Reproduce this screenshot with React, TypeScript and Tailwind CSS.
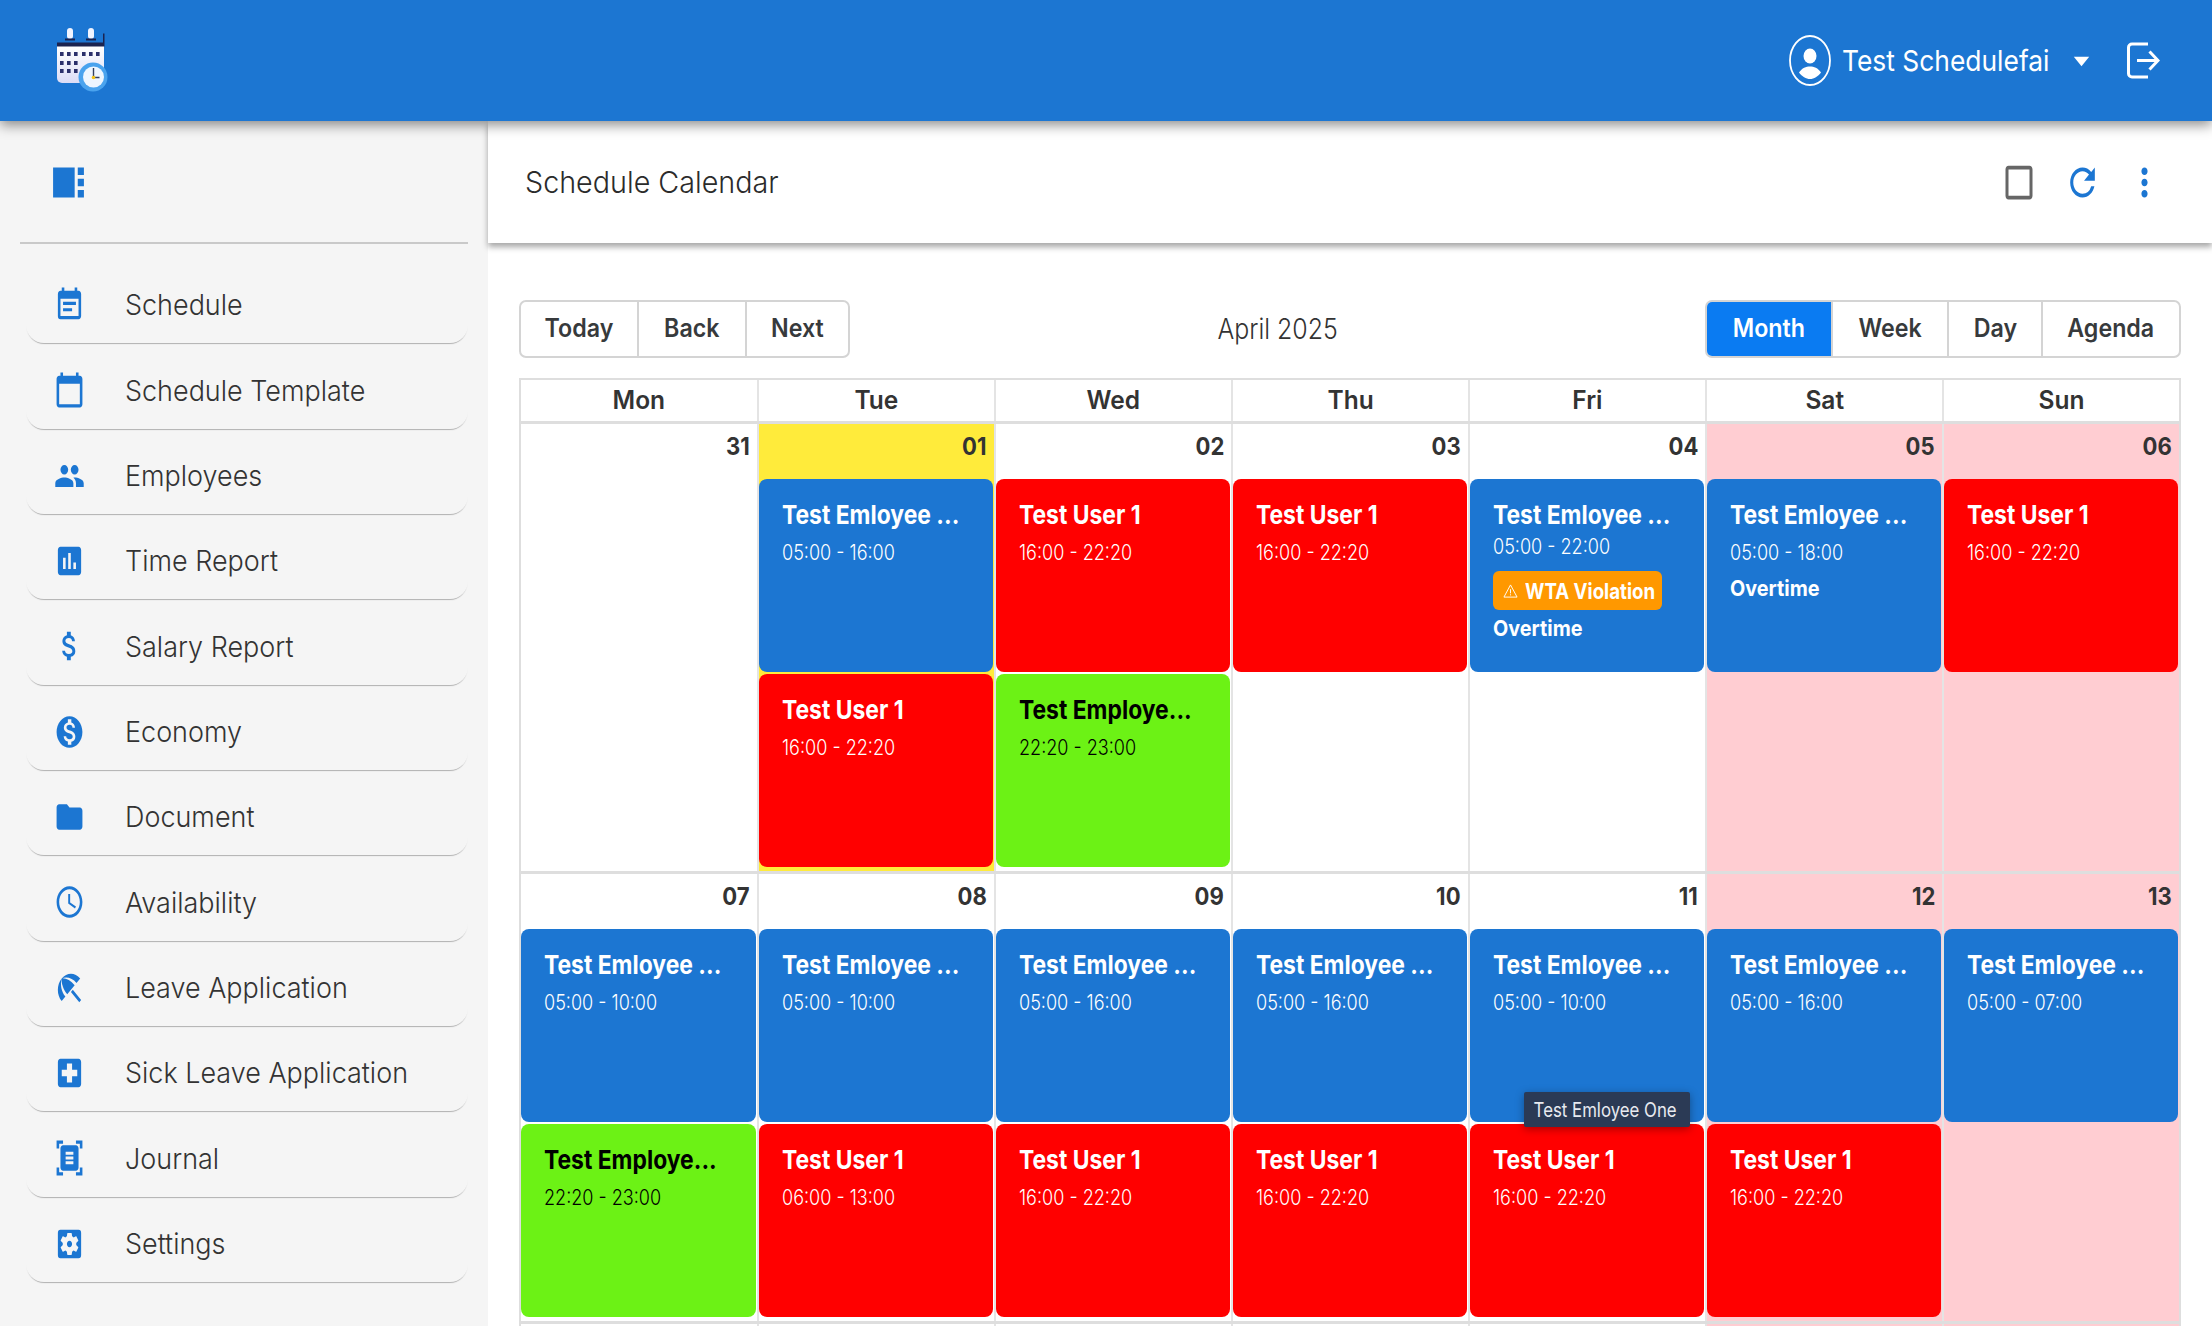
import React from "react";
import {
  MdEventNote, MdCalendarToday, MdPeople, MdAssessment, MdAttachMoney, MdMonetizationOn, MdFolder,
  MdAccessTime, MdBeachAccess, MdLocalHospital, MdDocumentScanner, MdSettingsApplications,
  MdViewSidebar, MdRefresh, MdMoreVert, MdCheckBoxOutlineBlank, MdArrowDropDown,
} from "react-icons/md";

const nav = [
  ["Schedule", MdEventNote], ["Schedule Template", MdCalendarToday], ["Employees", MdPeople],
  ["Time Report", MdAssessment], ["Salary Report", MdAttachMoney], ["Economy", MdMonetizationOn],
  ["Document", MdFolder], ["Availability", MdAccessTime], ["Leave Application", MdBeachAccess],
  ["Sick Leave Application", MdLocalHospital], ["Journal", MdDocumentScanner], ["Settings", MdSettingsApplications],
] as const;

type Ev = { c: "b" | "r" | "g"; t: string; time: string; kind?: "wta" | "ot" };
type Day = { d: string; bg?: string; ev: Ev[] };
const B = (time: string, kind?: "wta" | "ot"): Ev => ({ c: "b", t: "Test Emloyee ...", time, kind });
const R = (time = "16:00 - 22:20"): Ev => ({ c: "r", t: "Test User 1", time });
const G = (): Ev => ({ c: "g", t: "Test Employe...", time: "22:20 - 23:00" });
const W = "bg-[#ffcdd2]";

const weeks: Day[][] = [
  [
    { d: "31", ev: [] },
    { d: "01", bg: "bg-[#ffeb3b]", ev: [B("05:00 - 16:00"), R()] },
    { d: "02", ev: [R(), G()] },
    { d: "03", ev: [R()] },
    { d: "04", ev: [B("05:00 - 22:00", "wta")] },
    { d: "05", bg: W, ev: [B("05:00 - 18:00", "ot")] },
    { d: "06", bg: W, ev: [R()] },
  ],
  [
    { d: "07", ev: [B("05:00 - 10:00"), G()] },
    { d: "08", ev: [B("05:00 - 10:00"), R("06:00 - 13:00")] },
    { d: "09", ev: [B("05:00 - 16:00"), R()] },
    { d: "10", ev: [B("05:00 - 16:00"), R()] },
    { d: "11", ev: [B("05:00 - 10:00"), R()] },
    { d: "12", bg: W, ev: [B("05:00 - 16:00"), R()] },
    { d: "13", bg: W, ev: [B("05:00 - 07:00")] },
  ],
];

function Event({ e, tip }: { e: Ev; tip?: boolean }) {
  const bg = e.c === "b" ? "bg-[#1c76d2]" : e.c === "r" ? "bg-[#ff0000]" : "bg-[#6cf215]";
  const txt = e.c === "g" ? "text-black" : "text-white";
  return (
    <div className={`relative h-[193px] rounded-[8px] ${bg} ${txt} pl-[23px] pt-[21px] flex flex-col items-start`}>
      <span className="inline-block origin-left scale-x-[0.88] whitespace-nowrap text-[26px] leading-[30px] font-bold">{e.t}</span>
      <span className={`inline-block origin-left scale-x-[0.82] whitespace-nowrap text-[22px] leading-[30px] font-light ${e.kind === "wta" ? "mt-px" : "mt-[7px]"}`}>{e.time}</span>
      {e.kind === "wta" && (
        <>
          <div className="mt-[10px] w-[169px] h-[39px] rounded-[6px] bg-[#ff9800] flex items-center pl-[10px] text-white">
            <svg viewBox="0 0 16 16" className="w-[15px] h-[16px] shrink-0">
              <path d="M8 1.500 15 14.500H1z" fill="none" stroke="white" strokeWidth="1" strokeLinejoin="round" />
              <path d="M8 6v4.500M8 11.500v1.200" stroke="white" strokeWidth="1" />
            </svg>
            <span className="ml-[7px] inline-block origin-left scale-x-[0.85] whitespace-nowrap text-[22px] leading-[30px] font-bold">WTA Violation</span>
          </div>
          <span className="mt-[3px] inline-block origin-left scale-x-[0.9] whitespace-nowrap text-[22px] leading-[30px] font-bold">Overtime</span>
        </>
      )}
      {e.kind === "ot" && (
        <span className="mt-[6px] inline-block origin-left scale-x-[0.9] whitespace-nowrap text-[22px] leading-[30px] font-bold">Overtime</span>
      )}
      {tip && (
        <div className="absolute left-[54px] bottom-[-5px] w-[166px] h-[35px] bg-[#2b3a55] text-[#e8eaf0] flex items-center justify-center pr-[3px] shadow-[0_2px_8px_rgba(0,0,0,0.35)] z-10 rounded-[2px]">
          <span className="inline-block scale-x-[0.84] whitespace-nowrap text-[20px] leading-[24px]">Test Emloyee One</span>
        </div>
      )}
    </div>
  );
}

function Segment({ items, active }: { items: string[]; active?: string }) {
  return (
    <div className="flex h-[58px] rounded-[7px] border-2 border-[#d4d4d4] bg-white overflow-hidden">
      {items.map((x, i) => {
        const w: Record<string, string> = {
          Today: "w-[116px]", Back: "w-[108px]", Next: "w-[103px]",
          Month: "w-[124px]", Week: "w-[116px]", Day: "w-[94px]", Agenda: "w-[138px]",
        };
        return (
          <div key={x} className={`${w[x]} flex items-center justify-center ${i ? "border-l-2 border-[#d4d4d4]" : ""} ${x === active ? "bg-[#0a7bf2] text-white" : "text-[#373a3c]"}`}>
            <span className="inline-block scale-x-[0.93] whitespace-nowrap text-[25px] font-semibold">{x}</span>
          </div>
        );
      })}
    </div>
  );
}

function Logo() {
  return (
    <svg viewBox="50 24 62 72" className="w-[62px] h-[72px]">
      <defs>
        <linearGradient id="lg" x1="0" y1="0" x2="0" y2="1">
          <stop offset="0" stopColor="#ffffff" />
          <stop offset="1" stopColor="#dcdcf6" />
        </linearGradient>
      </defs>
      <path d="M57 46h47v32a5 5 0 0 1-5 5H62a5 5 0 0 1-5-5z" fill="url(#lg)" />
      <path d="M57 42.500h46v-9h1.500v13H57z" fill="#1a2350" />
      <rect x="67" y="28" width="6" height="11" rx="3" fill="#f2f4ff" />
      <rect x="88" y="28" width="6" height="11" rx="3" fill="#f2f4ff" />
      <path d="M65 39.500h10M86 39.500h10" stroke="#1a2350" strokeWidth="2" />
      {[52, 61, 69].map((y) =>
        [60, 67, 74, 82, 89, 96].map((x) =>
          y > 55 && x > 80 ? null : y > 65 && x > 75 ? null : <rect key={`${x}${y}`} x={x} y={y} width="3.6" height="4" fill="#2b2f6b" />
        )
      )}
      <circle cx="93" cy="77" r="14.500" fill="#4aa3ee" />
      <circle cx="93.500" cy="77" r="10.500" fill="#eef6ff" />
      <path d="M93.500 68v9.500h6" stroke="#33405f" strokeWidth="1.400" fill="none" />
      <circle cx="93.500" cy="77.500" r="1.800" fill="#f5c518" />
    </svg>
  );
}

export default function App() {
  return (
    <div className="w-[2212px] h-[1326px] overflow-hidden bg-white flex flex-col font-['Inter',sans-serif]">
      <header className="relative z-20 h-[121px] shrink-0 bg-[#1c76d2] flex items-center shadow-[0_4px_12px_rgba(0,0,0,0.45)] text-white">
        <div className="ml-[50px] mt-[-1px]"><Logo /></div>
        <div className="ml-auto flex items-center">
          <svg viewBox="0 0 42 51" className="w-[42px] h-[51px]">
            <ellipse cx="21" cy="25.500" rx="20" ry="24.500" fill="none" stroke="white" strokeWidth="1.800" />
            <ellipse cx="21" cy="21" rx="6.500" ry="7.500" fill="white" />
            <path d="M10 37.500C13 33 17 31.500 21 31.500s8 1.500 11 6C29 41.500 25 44 21 44s-8-2.500-11-6.500z" fill="white" />
          </svg>
          <span className="ml-[11px] w-[216px] inline-block origin-left scale-x-[0.91] whitespace-nowrap text-[29px] font-normal">Test Schedulefai</span>
          <MdArrowDropDown className="ml-[5px] w-[37px] h-[45px]" preserveAspectRatio="none" />
          <svg viewBox="0 0 34 37" className="ml-[26px] mr-[52px] w-[34px] h-[37px]">
            <path d="M22 2H6a3.500 3.500 0 0 0-3.500 3.500v26A3.500 3.500 0 0 0 6 35h16" fill="none" stroke="white" strokeWidth="3" />
            <path d="M11 18.500h20M23.500 9.500l8.500 9-8.500 9" fill="none" stroke="white" strokeWidth="3" />
          </svg>
        </div>
      </header>

      <div className="flex flex-1 min-h-0">
        <aside className="w-[488px] shrink-0 bg-[#f5f5f5]">
          <div className="h-[123px] mx-[20px] border-b-2 border-[#c9c9c9] flex items-center">
            <MdViewSidebar className="ml-[30px] mt-[2px] w-[37px] h-[45px] text-[#1c76d2]" preserveAspectRatio="none" />
          </div>
          <nav className="pt-[14px] ml-[26px] mr-[20px] flex flex-col">
            {nav.map(([label, Icon]) => (
              <div key={label} className="h-[85.33px] shrink-0 rounded-b-[18px] shadow-[0_2px_1px_-1px_rgba(0,0,0,0.28)] flex items-center pt-[9px]">
                <Icon className="ml-[28px] w-[31px] h-[38px] text-[#1c76d2]" preserveAspectRatio="none" />
                <span className="ml-[40px] inline-block origin-left scale-x-[0.93] whitespace-nowrap text-[29px] font-light text-[#333]">{label}</span>
              </div>
            ))}
          </nav>
        </aside>

        <main className="flex-1 min-w-0 flex flex-col">
          <div className="relative z-10 h-[122px] shrink-0 bg-white flex items-center shadow-[0_4px_6px_rgba(0,0,0,0.35)] pl-[37px]">
            <span className="inline-block origin-left scale-x-[0.957] whitespace-nowrap text-[30px] font-light text-[#2b2b2b]">Schedule Calendar</span>
            <div className="ml-auto flex items-center">
              <MdCheckBoxOutlineBlank className="w-[36px] h-[45px] text-[#666]" preserveAspectRatio="none" />
              <MdRefresh className="ml-[27px] w-[37px] h-[45px] text-[#1c76d2]" preserveAspectRatio="none" />
              <MdMoreVert className="ml-[25px] mr-[49px] w-[37px] h-[45px] text-[#1c76d2]" preserveAspectRatio="none" />
            </div>
          </div>

          <div className="flex-1 min-h-0 overflow-hidden px-[31px] pt-[57px]">
            <div className="flex items-center justify-between">
              <Segment items={["Today", "Back", "Next"]} />
              <span className="inline-block scale-x-[0.89] whitespace-nowrap text-[28px] font-light text-[#333]">April 2025</span>
              <Segment items={["Month", "Week", "Day", "Agenda"]} active="Month" />
            </div>

            <div className="mt-[20px] border-x-2 border-[#dedede]">
              <div className="grid grid-cols-[236px_repeat(6,1fr)] h-[46px] border-t-2 border-b-[3px] border-[#dedede]">
                {["Mon", "Tue", "Wed", "Thu", "Fri", "Sat", "Sun"].map((d, i) => (
                  <div key={d} className={`flex items-center justify-center ${i ? "border-l-2 border-[#e4e4e4]" : ""}`}>
                    <span className="inline-block scale-x-[0.98] text-[25px] font-semibold text-[#333]">{d}</span>
                  </div>
                ))}
              </div>
              {weeks.map((w, wi) => (
                <div key={wi} className="grid grid-cols-[236px_repeat(6,1fr)] h-[450px] border-b-[3px] border-[#dedede]">
                  {w.map((c, ci) => (
                    <div key={c.d} className={`${c.bg ?? ""} ${ci ? "border-l-2 border-[#e4e4e4]" : ""} min-w-0 pr-[1px]`}>
                      <div className="h-[55px] flex justify-end items-start pr-[6px]">
                        <span className="inline-block origin-right scale-x-[0.92] text-[24px] leading-[46px] font-bold text-[#333]">{c.d}</span>
                      </div>
                      <div className="flex flex-col gap-[2px]">
                        {c.ev.map((e, i) => <Event key={i} e={e} tip={wi === 1 && ci === 4 && i === 0} />)}
                      </div>
                    </div>
                  ))}
                </div>
              ))}
              <div className="grid grid-cols-[236px_repeat(6,1fr)] h-[20px]">
                {[0, 1, 2, 3, 4, 5, 6].map((i) => (
                  <div key={i} className={`${i > 4 ? "bg-[#ffcdd2]" : ""} ${i ? "border-l-2 border-[#e4e4e4]" : ""}`} />
                ))}
              </div>
            </div>
          </div>
        </main>
      </div>
    </div>
  );
}
